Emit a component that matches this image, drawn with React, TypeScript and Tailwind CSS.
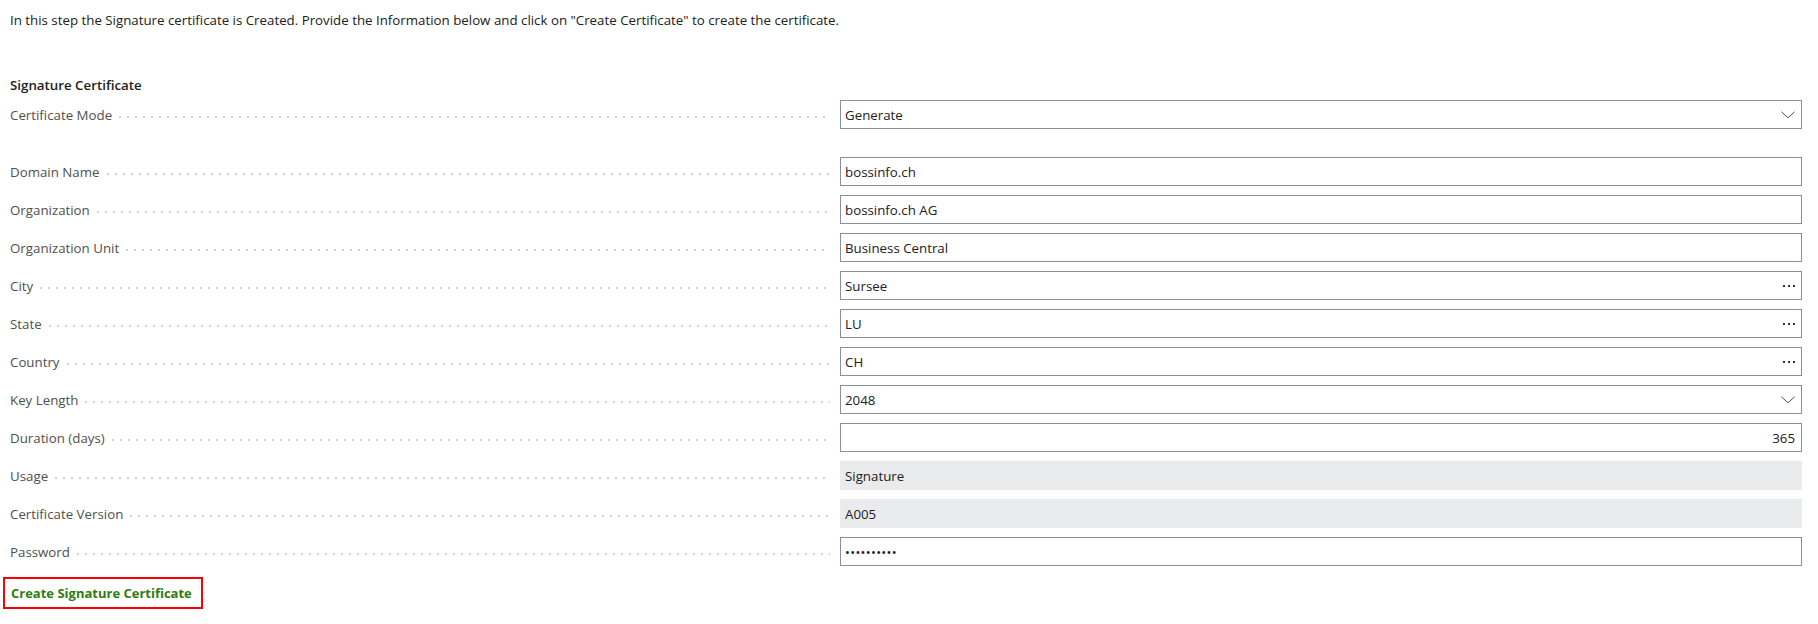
import React from "react";

type Row = {
  label: string;
  value: string;
  kind: "select" | "text" | "lookup" | "number" | "readonly" | "password";
  spaceBefore?: boolean;
};

const rows: Row[] = [
  { label: "Certificate Mode", value: "Generate", kind: "select" },
  { label: "Domain Name", value: "bossinfo.ch", kind: "text", spaceBefore: true },
  { label: "Organization", value: "bossinfo.ch AG", kind: "text" },
  { label: "Organization Unit", value: "Business Central", kind: "text" },
  { label: "City", value: "Sursee", kind: "lookup" },
  { label: "State", value: "LU", kind: "lookup" },
  { label: "Country", value: "CH", kind: "lookup" },
  { label: "Key Length", value: "2048", kind: "select" },
  { label: "Duration (days)", value: "365", kind: "number" },
  { label: "Usage", value: "Signature", kind: "readonly" },
  { label: "Certificate Version", value: "A005", kind: "readonly" },
  { label: "Password", value: "••••••••••", kind: "password" },
];

function Chevron() {
  return (
    <svg width="14" height="8" viewBox="0 0 14 8" className="shrink-0">
      <polyline points="0.5,0.8 7,6.8 13.5,0.8" fill="none" stroke="#505050" strokeWidth="1" />
    </svg>
  );
}

function Ellipsis() {
  return (
    <div className="flex items-center gap-[3px] shrink-0">
      <span className="block w-[2px] h-[2px] bg-[#333]" />
      <span className="block w-[2px] h-[2px] bg-[#333]" />
      <span className="block w-[2px] h-[2px] bg-[#333]" />
    </div>
  );
}

function Field({ row }: { row: Row }) {
  if (row.kind === "readonly") {
    return (
      <div className="flex-1 h-[29px] bg-[#eaebec] flex items-center pl-[5px] text-[#212121]">
        {row.value}
      </div>
    );
  }
  return (
    <div className="flex-1 h-[29px] border border-[#8a8f99] bg-white flex items-center pl-[4px] pr-[6px] text-[#212121]">
      {row.kind === "number" ? (
        <span className="flex-1 text-right">{row.value}</span>
      ) : (
        <span className={"flex-1 " + (row.kind === "password" ? "text-[13px] tracking-[0.3px]" : "")}>
          {row.value}
        </span>
      )}
      {row.kind === "select" && <Chevron />}
      {row.kind === "lookup" && <Ellipsis />}
    </div>
  );
}

export default function App() {
  return (
    <div
      className="w-full bg-white pl-[10px] pr-[16px] pt-[11px] pb-[16px] text-[13.3px] leading-[18px]"
      style={{ fontFamily: '"Open Sans", "Noto Sans", sans-serif' }}
    >
      <p className="text-[#212121]">
        In this step the Signature certificate is Created. Provide the Information below and click on "Create Certificate" to create the certificate.
      </p>
      <h2 className="mt-[47px] font-semibold text-[#212121]">Signature Certificate</h2>
      <div className="mt-[6px] flex flex-col gap-[9px]">
        {rows.map((r) => (
          <div key={r.label} className={"flex items-center " + (r.spaceBefore ? "mt-[19px]" : "")}>
            <div className="w-[830px] flex items-center shrink-0">
              <span className="text-[#505050] whitespace-nowrap">{r.label}</span>
              <div className="flex-1 h-[2px] ml-[7px] mr-[10px] mt-[4px] [background-image:linear-gradient(to_right,#d2d2d2_2px,transparent_2px)] [background-size:8px_2px] [background-repeat:repeat-x]" />
            </div>
            <Field row={r} />
          </div>
        ))}
      </div>
      <div className="mt-[11px] ml-[-7px] w-[200px] h-[32px] border-2 border-[#ff0000] flex items-center pl-[6px]">
        <span className="font-bold text-[13px] text-[#2f7d10]">Create Signature Certificate</span>
      </div>
    </div>
  );
}
